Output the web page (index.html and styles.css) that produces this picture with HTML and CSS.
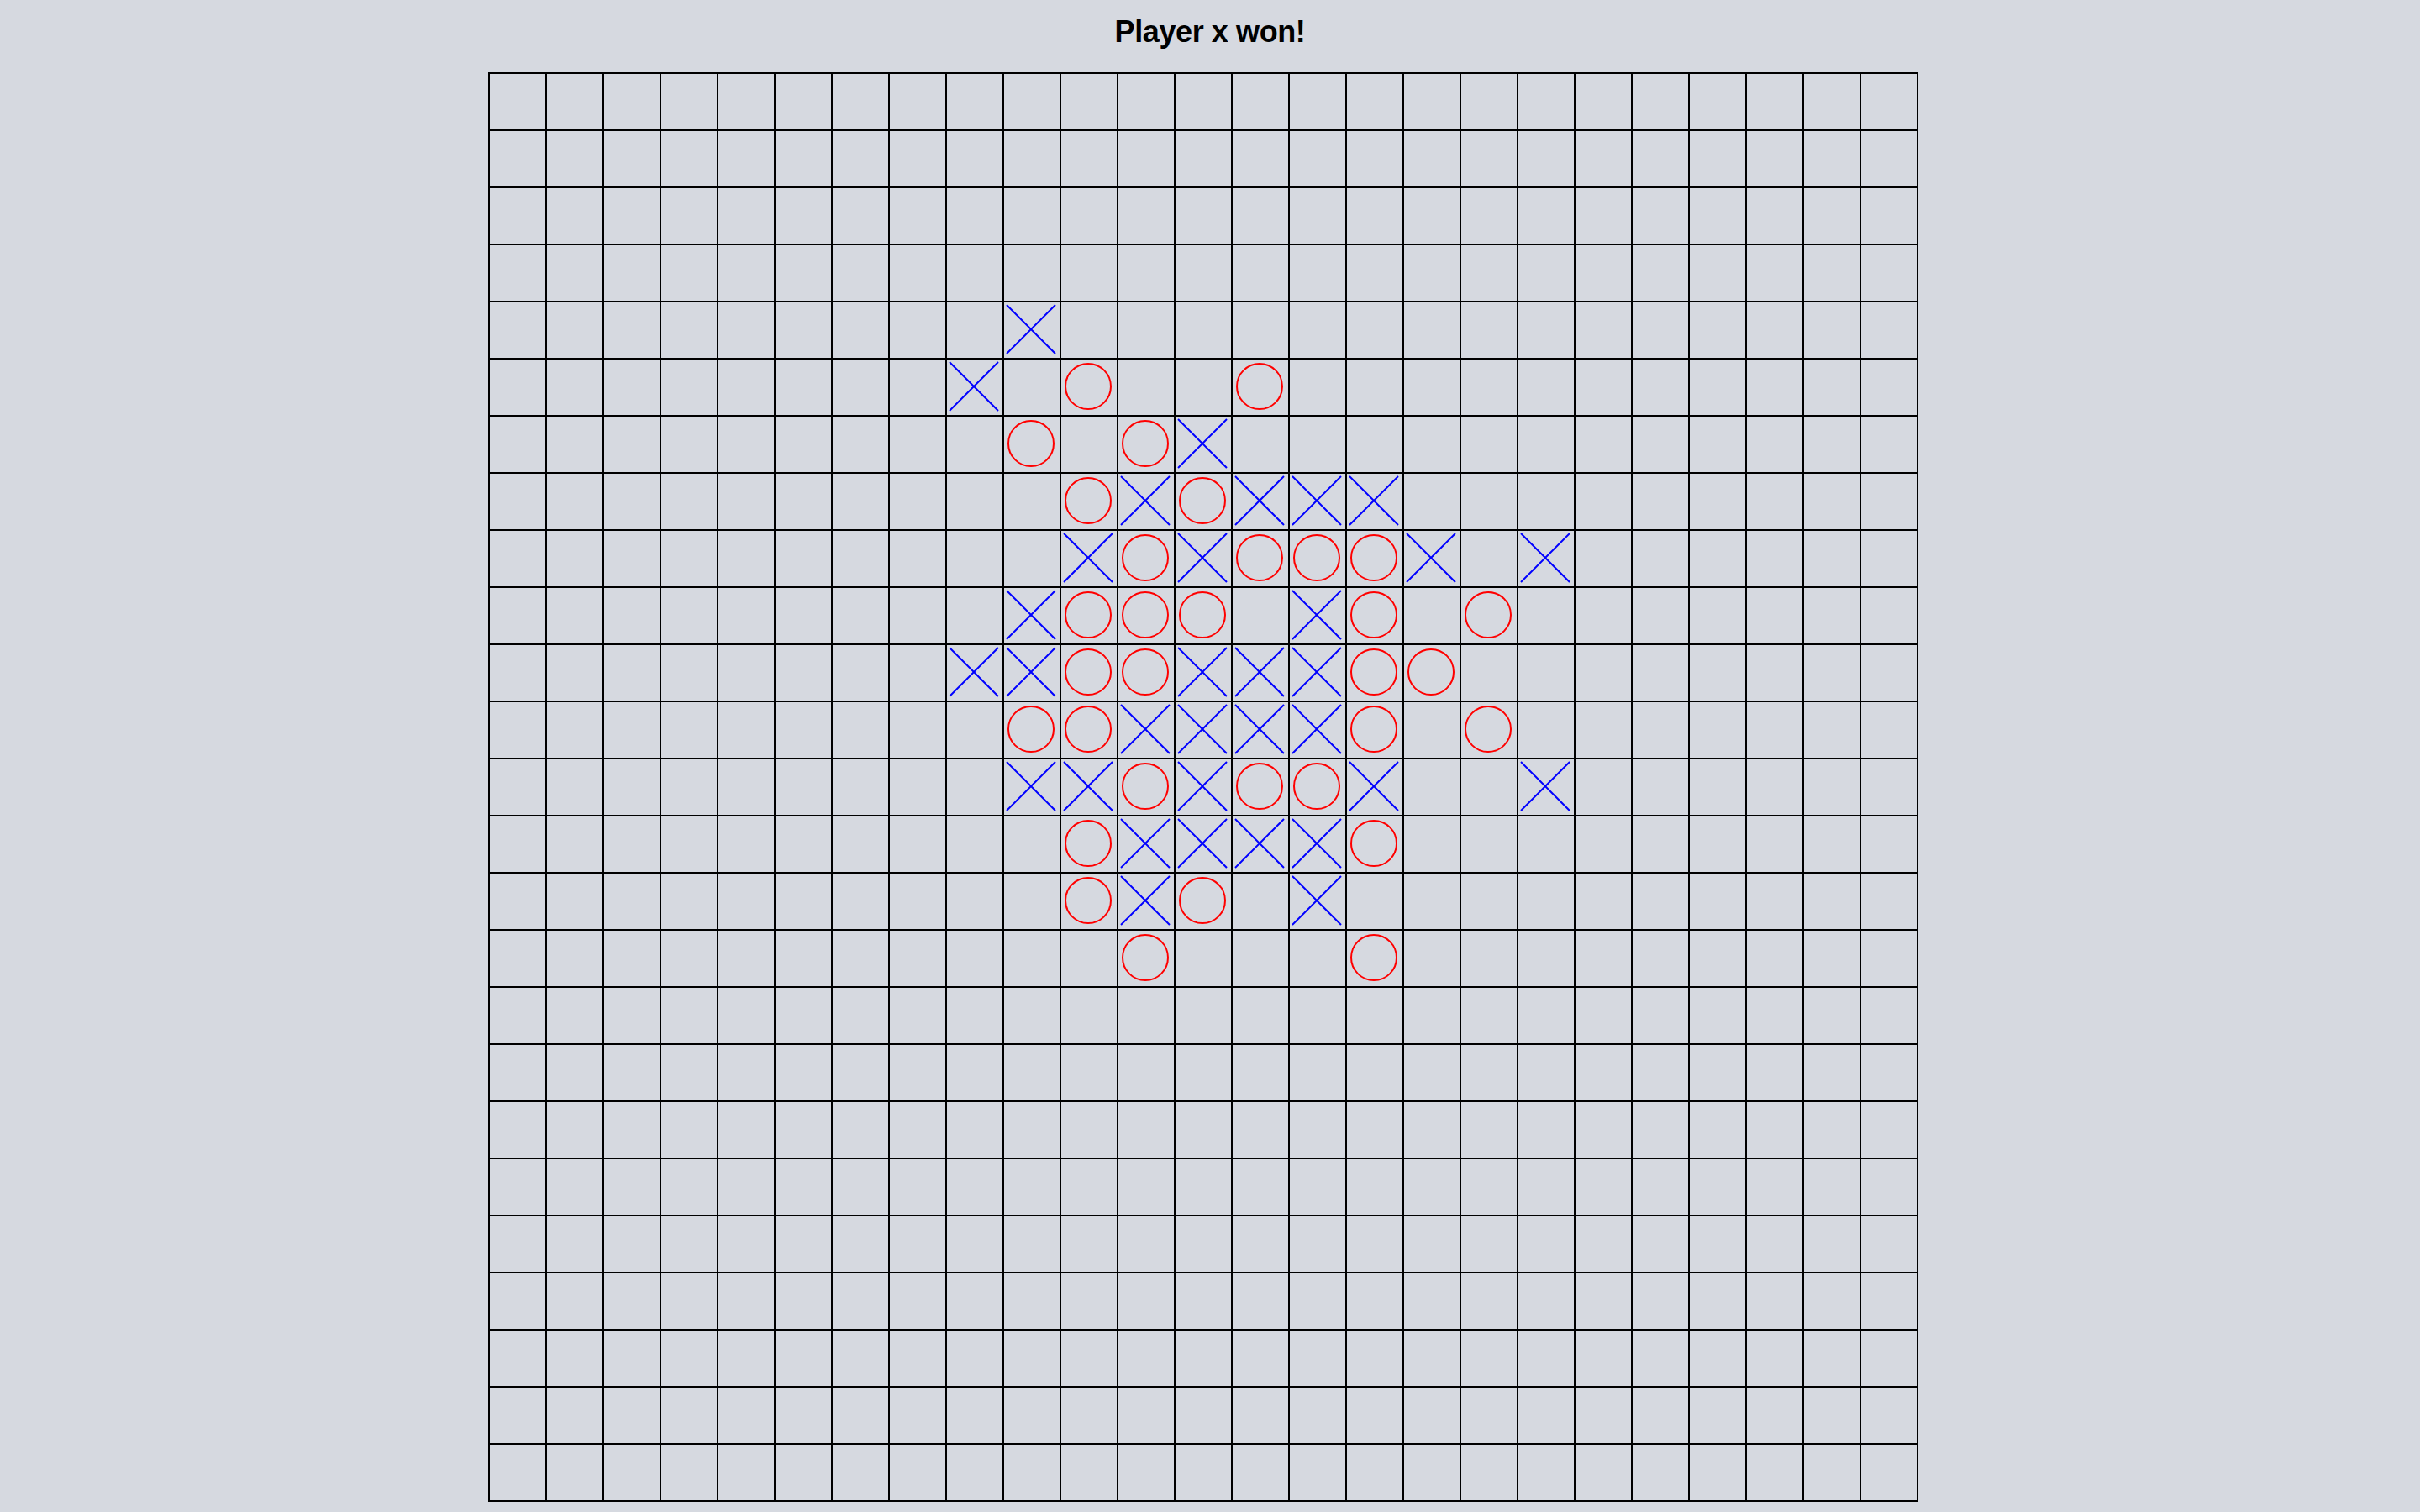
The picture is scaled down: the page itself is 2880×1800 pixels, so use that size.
FILE: index.html
```html
<!DOCTYPE html>
<html lang="en">
<head>
<meta charset="utf-8">
<title>Gomoku</title>
<link rel="stylesheet" href="styles.css">
</head>
<body>
<div class="page">
<h1 class="title">Player x won!</h1>
<div class="board">
<div class="c"></div><div class="c"></div><div class="c"></div><div class="c"></div><div class="c"></div> <div class="c"></div><div class="c"></div><div class="c"></div><div class="c"></div><div class="c"></div> <div class="c"></div><div class="c"></div><div class="c"></div><div class="c"></div><div class="c"></div> <div class="c"></div><div class="c"></div><div class="c"></div><div class="c"></div><div class="c"></div> <div class="c"></div><div class="c"></div><div class="c"></div><div class="c"></div><div class="c"></div>
<div class="c"></div><div class="c"></div><div class="c"></div><div class="c"></div><div class="c"></div> <div class="c"></div><div class="c"></div><div class="c"></div><div class="c"></div><div class="c"></div> <div class="c"></div><div class="c"></div><div class="c"></div><div class="c"></div><div class="c"></div> <div class="c"></div><div class="c"></div><div class="c"></div><div class="c"></div><div class="c"></div> <div class="c"></div><div class="c"></div><div class="c"></div><div class="c"></div><div class="c"></div>
<div class="c"></div><div class="c"></div><div class="c"></div><div class="c"></div><div class="c"></div> <div class="c"></div><div class="c"></div><div class="c"></div><div class="c"></div><div class="c"></div> <div class="c"></div><div class="c"></div><div class="c"></div><div class="c"></div><div class="c"></div> <div class="c"></div><div class="c"></div><div class="c"></div><div class="c"></div><div class="c"></div> <div class="c"></div><div class="c"></div><div class="c"></div><div class="c"></div><div class="c"></div>
<div class="c"></div><div class="c"></div><div class="c"></div><div class="c"></div><div class="c"></div> <div class="c"></div><div class="c"></div><div class="c"></div><div class="c"></div><div class="c"></div> <div class="c"></div><div class="c"></div><div class="c"></div><div class="c"></div><div class="c"></div> <div class="c"></div><div class="c"></div><div class="c"></div><div class="c"></div><div class="c"></div> <div class="c"></div><div class="c"></div><div class="c"></div><div class="c"></div><div class="c"></div>
<div class="c"></div><div class="c"></div><div class="c"></div><div class="c"></div><div class="c"></div> <div class="c"></div><div class="c"></div><div class="c"></div><div class="c"></div><div class="c x"></div> <div class="c"></div><div class="c"></div><div class="c"></div><div class="c"></div><div class="c"></div> <div class="c"></div><div class="c"></div><div class="c"></div><div class="c"></div><div class="c"></div> <div class="c"></div><div class="c"></div><div class="c"></div><div class="c"></div><div class="c"></div>
<div class="c"></div><div class="c"></div><div class="c"></div><div class="c"></div><div class="c"></div> <div class="c"></div><div class="c"></div><div class="c"></div><div class="c x"></div><div class="c"></div> <div class="c o"></div><div class="c"></div><div class="c"></div><div class="c o"></div><div class="c"></div> <div class="c"></div><div class="c"></div><div class="c"></div><div class="c"></div><div class="c"></div> <div class="c"></div><div class="c"></div><div class="c"></div><div class="c"></div><div class="c"></div>
<div class="c"></div><div class="c"></div><div class="c"></div><div class="c"></div><div class="c"></div> <div class="c"></div><div class="c"></div><div class="c"></div><div class="c"></div><div class="c o"></div> <div class="c"></div><div class="c o"></div><div class="c x"></div><div class="c"></div><div class="c"></div> <div class="c"></div><div class="c"></div><div class="c"></div><div class="c"></div><div class="c"></div> <div class="c"></div><div class="c"></div><div class="c"></div><div class="c"></div><div class="c"></div>
<div class="c"></div><div class="c"></div><div class="c"></div><div class="c"></div><div class="c"></div> <div class="c"></div><div class="c"></div><div class="c"></div><div class="c"></div><div class="c"></div> <div class="c o"></div><div class="c x"></div><div class="c o"></div><div class="c x"></div><div class="c x"></div> <div class="c x"></div><div class="c"></div><div class="c"></div><div class="c"></div><div class="c"></div> <div class="c"></div><div class="c"></div><div class="c"></div><div class="c"></div><div class="c"></div>
<div class="c"></div><div class="c"></div><div class="c"></div><div class="c"></div><div class="c"></div> <div class="c"></div><div class="c"></div><div class="c"></div><div class="c"></div><div class="c"></div> <div class="c x"></div><div class="c o"></div><div class="c x"></div><div class="c o"></div><div class="c o"></div> <div class="c o"></div><div class="c x"></div><div class="c"></div><div class="c x"></div><div class="c"></div> <div class="c"></div><div class="c"></div><div class="c"></div><div class="c"></div><div class="c"></div>
<div class="c"></div><div class="c"></div><div class="c"></div><div class="c"></div><div class="c"></div> <div class="c"></div><div class="c"></div><div class="c"></div><div class="c"></div><div class="c x"></div> <div class="c o"></div><div class="c o"></div><div class="c o"></div><div class="c"></div><div class="c x"></div> <div class="c o"></div><div class="c"></div><div class="c o"></div><div class="c"></div><div class="c"></div> <div class="c"></div><div class="c"></div><div class="c"></div><div class="c"></div><div class="c"></div>
<div class="c"></div><div class="c"></div><div class="c"></div><div class="c"></div><div class="c"></div> <div class="c"></div><div class="c"></div><div class="c"></div><div class="c x"></div><div class="c x"></div> <div class="c o"></div><div class="c o"></div><div class="c x"></div><div class="c x"></div><div class="c x"></div> <div class="c o"></div><div class="c o"></div><div class="c"></div><div class="c"></div><div class="c"></div> <div class="c"></div><div class="c"></div><div class="c"></div><div class="c"></div><div class="c"></div>
<div class="c"></div><div class="c"></div><div class="c"></div><div class="c"></div><div class="c"></div> <div class="c"></div><div class="c"></div><div class="c"></div><div class="c"></div><div class="c o"></div> <div class="c o"></div><div class="c x"></div><div class="c x"></div><div class="c x"></div><div class="c x"></div> <div class="c o"></div><div class="c"></div><div class="c o"></div><div class="c"></div><div class="c"></div> <div class="c"></div><div class="c"></div><div class="c"></div><div class="c"></div><div class="c"></div>
<div class="c"></div><div class="c"></div><div class="c"></div><div class="c"></div><div class="c"></div> <div class="c"></div><div class="c"></div><div class="c"></div><div class="c"></div><div class="c x"></div> <div class="c x"></div><div class="c o"></div><div class="c x"></div><div class="c o"></div><div class="c o"></div> <div class="c x"></div><div class="c"></div><div class="c"></div><div class="c x"></div><div class="c"></div> <div class="c"></div><div class="c"></div><div class="c"></div><div class="c"></div><div class="c"></div>
<div class="c"></div><div class="c"></div><div class="c"></div><div class="c"></div><div class="c"></div> <div class="c"></div><div class="c"></div><div class="c"></div><div class="c"></div><div class="c"></div> <div class="c o"></div><div class="c x"></div><div class="c x"></div><div class="c x"></div><div class="c x"></div> <div class="c o"></div><div class="c"></div><div class="c"></div><div class="c"></div><div class="c"></div> <div class="c"></div><div class="c"></div><div class="c"></div><div class="c"></div><div class="c"></div>
<div class="c"></div><div class="c"></div><div class="c"></div><div class="c"></div><div class="c"></div> <div class="c"></div><div class="c"></div><div class="c"></div><div class="c"></div><div class="c"></div> <div class="c o"></div><div class="c x"></div><div class="c o"></div><div class="c"></div><div class="c x"></div> <div class="c"></div><div class="c"></div><div class="c"></div><div class="c"></div><div class="c"></div> <div class="c"></div><div class="c"></div><div class="c"></div><div class="c"></div><div class="c"></div>
<div class="c"></div><div class="c"></div><div class="c"></div><div class="c"></div><div class="c"></div> <div class="c"></div><div class="c"></div><div class="c"></div><div class="c"></div><div class="c"></div> <div class="c"></div><div class="c o"></div><div class="c"></div><div class="c"></div><div class="c"></div> <div class="c o"></div><div class="c"></div><div class="c"></div><div class="c"></div><div class="c"></div> <div class="c"></div><div class="c"></div><div class="c"></div><div class="c"></div><div class="c"></div>
<div class="c"></div><div class="c"></div><div class="c"></div><div class="c"></div><div class="c"></div> <div class="c"></div><div class="c"></div><div class="c"></div><div class="c"></div><div class="c"></div> <div class="c"></div><div class="c"></div><div class="c"></div><div class="c"></div><div class="c"></div> <div class="c"></div><div class="c"></div><div class="c"></div><div class="c"></div><div class="c"></div> <div class="c"></div><div class="c"></div><div class="c"></div><div class="c"></div><div class="c"></div>
<div class="c"></div><div class="c"></div><div class="c"></div><div class="c"></div><div class="c"></div> <div class="c"></div><div class="c"></div><div class="c"></div><div class="c"></div><div class="c"></div> <div class="c"></div><div class="c"></div><div class="c"></div><div class="c"></div><div class="c"></div> <div class="c"></div><div class="c"></div><div class="c"></div><div class="c"></div><div class="c"></div> <div class="c"></div><div class="c"></div><div class="c"></div><div class="c"></div><div class="c"></div>
<div class="c"></div><div class="c"></div><div class="c"></div><div class="c"></div><div class="c"></div> <div class="c"></div><div class="c"></div><div class="c"></div><div class="c"></div><div class="c"></div> <div class="c"></div><div class="c"></div><div class="c"></div><div class="c"></div><div class="c"></div> <div class="c"></div><div class="c"></div><div class="c"></div><div class="c"></div><div class="c"></div> <div class="c"></div><div class="c"></div><div class="c"></div><div class="c"></div><div class="c"></div>
<div class="c"></div><div class="c"></div><div class="c"></div><div class="c"></div><div class="c"></div> <div class="c"></div><div class="c"></div><div class="c"></div><div class="c"></div><div class="c"></div> <div class="c"></div><div class="c"></div><div class="c"></div><div class="c"></div><div class="c"></div> <div class="c"></div><div class="c"></div><div class="c"></div><div class="c"></div><div class="c"></div> <div class="c"></div><div class="c"></div><div class="c"></div><div class="c"></div><div class="c"></div>
<div class="c"></div><div class="c"></div><div class="c"></div><div class="c"></div><div class="c"></div> <div class="c"></div><div class="c"></div><div class="c"></div><div class="c"></div><div class="c"></div> <div class="c"></div><div class="c"></div><div class="c"></div><div class="c"></div><div class="c"></div> <div class="c"></div><div class="c"></div><div class="c"></div><div class="c"></div><div class="c"></div> <div class="c"></div><div class="c"></div><div class="c"></div><div class="c"></div><div class="c"></div>
<div class="c"></div><div class="c"></div><div class="c"></div><div class="c"></div><div class="c"></div> <div class="c"></div><div class="c"></div><div class="c"></div><div class="c"></div><div class="c"></div> <div class="c"></div><div class="c"></div><div class="c"></div><div class="c"></div><div class="c"></div> <div class="c"></div><div class="c"></div><div class="c"></div><div class="c"></div><div class="c"></div> <div class="c"></div><div class="c"></div><div class="c"></div><div class="c"></div><div class="c"></div>
<div class="c"></div><div class="c"></div><div class="c"></div><div class="c"></div><div class="c"></div> <div class="c"></div><div class="c"></div><div class="c"></div><div class="c"></div><div class="c"></div> <div class="c"></div><div class="c"></div><div class="c"></div><div class="c"></div><div class="c"></div> <div class="c"></div><div class="c"></div><div class="c"></div><div class="c"></div><div class="c"></div> <div class="c"></div><div class="c"></div><div class="c"></div><div class="c"></div><div class="c"></div>
<div class="c"></div><div class="c"></div><div class="c"></div><div class="c"></div><div class="c"></div> <div class="c"></div><div class="c"></div><div class="c"></div><div class="c"></div><div class="c"></div> <div class="c"></div><div class="c"></div><div class="c"></div><div class="c"></div><div class="c"></div> <div class="c"></div><div class="c"></div><div class="c"></div><div class="c"></div><div class="c"></div> <div class="c"></div><div class="c"></div><div class="c"></div><div class="c"></div><div class="c"></div>
<div class="c"></div><div class="c"></div><div class="c"></div><div class="c"></div><div class="c"></div> <div class="c"></div><div class="c"></div><div class="c"></div><div class="c"></div><div class="c"></div> <div class="c"></div><div class="c"></div><div class="c"></div><div class="c"></div><div class="c"></div> <div class="c"></div><div class="c"></div><div class="c"></div><div class="c"></div><div class="c"></div> <div class="c"></div><div class="c"></div><div class="c"></div><div class="c"></div><div class="c"></div>
</div>
</div>
</body>
</html>
```
FILE: styles.css
```css
html, body {
  margin: 0;
  padding: 0;
}

body {
  background: #d6d9e0;
  font-family: "Liberation Sans", Arial, Helvetica, sans-serif;
  color: #000;
}

.page {
  display: flex;
  flex-direction: column;
  align-items: center;
  padding-top: 17px;
}

.title {
  margin: 0 0 28px;
  font-size: 36px;
  line-height: 41px;
  font-weight: bold;
  letter-spacing: -0.4px;
}

.board {
  display: grid;
  grid-template-columns: repeat(25, 68px);
  grid-auto-rows: 68px;
  border-left: 2px solid #000;
  border-top: 2px solid #000;
  margin-right: 16px;
}

.c {
  box-sizing: border-box;
  border-right: 2px solid #000;
  border-bottom: 2px solid #000;
  position: relative;
}

.o::before {
  content: "";
  position: absolute;
  left: 4px;
  top: 4px;
  width: 56px;
  height: 56px;
  box-sizing: border-box;
  border: 2px solid #ff0000;
  border-radius: 50%;
}

.x::before,
.x::after {
  content: "";
  position: absolute;
  left: -9px;
  top: 31px;
  width: 82px;
  height: 2px;
  background: #0000ff;
  transform: rotate(45deg);
}

.x::after {
  transform: rotate(-45deg);
}
```
